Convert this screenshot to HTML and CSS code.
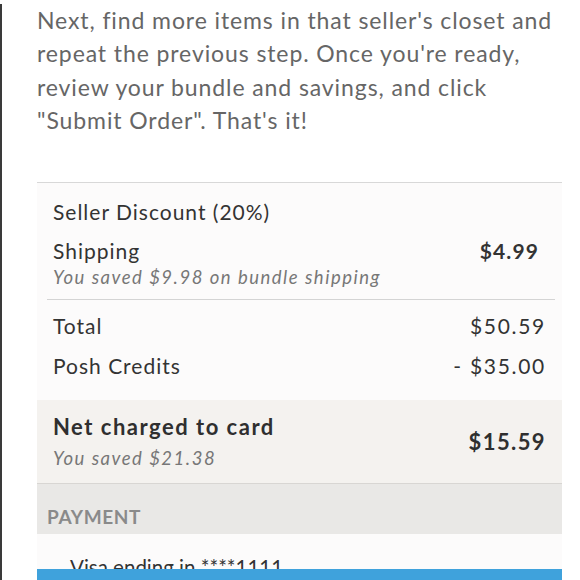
FILE: index.html
```html
<!DOCTYPE html>
<html lang="en">
<head>
    <meta charset="UTF-8">
    <meta name="viewport" content="width=device-width, initial-scale=1.0">
    <title>Bundle Checkout</title>
    <link rel="stylesheet" href="styles.css">
</head>
<body>

<div class="page">
    <div class="column">
        <p class="intro">Next, find more items in that seller's closet and repeat the previous step. Once you're ready, review your bundle and savings, and click "Submit Order". That's it!</p>

        <div class="summary">
            <!-- Order breakdown -->
            <div class="breakdown">
                <div class="row">
                    <span class="label">Seller Discount (20%)</span>
                </div>
                <div class="row">
                    <div>
                        <div class="label">Shipping</div>
                        <div class="note">You saved $9.98 on bundle shipping</div>
                    </div>
                    <span class="amount bold">$4.99</span>
                </div>
            </div>

            <div class="totals">
                <div class="row">
                    <span class="label">Total</span>
                    <span class="amount">$50.59</span>
                </div>
                <div class="row">
                    <span class="label">Posh Credits</span>
                    <span class="amount">- $35.00</span>
                </div>
            </div>

            <!-- Net charge -->
            <div class="net">
                <div>
                    <div class="net-title">Net charged to card</div>
                    <div class="note">You saved $21.38</div>
                </div>
                <span class="net-amount">$15.59</span>
            </div>

            <div class="section-head">PAYMENT</div>
            <div class="payment">
                <span class="card">Visa ending in ****1111</span>
            </div>
        </div>
    </div>

    <button class="submit">Submit Order</button>
</div>

</body>
</html>
```

FILE: styles.css
```css
body {
    margin: 0;
    padding: 0;
    background-color: #ffffff;
    font-family: Lato, "Open Sans", Arial, sans-serif;
    color: #333;
    overflow: hidden;
}

.page {
    border-left: 2px solid #3a3a3a;
    height: 100vh;
    box-sizing: border-box;
}

.column {
    margin-left: 35px;
    width: 525px;
}

.intro {
    margin: 4px 0 0;
    font-size: 23px;
    line-height: 33.3px;
    letter-spacing: 0.9px;
    color: #666;
    height: 178px;
}

.summary {
    background-color: #fcfbfb;
    border-top: 1px solid #d8d8d8;
}

.row {
    display: flex;
    justify-content: space-between;
    align-items: flex-start;
}

.label {
    font-size: 21px;
    line-height: 24px;
    letter-spacing: 1px;
    color: #333;
}

.note {
    font-size: 18.5px;
    line-height: 24px;
    letter-spacing: 1.5px;
    font-style: italic;
    color: #777;
    margin-top: 2px;
}

.amount {
    font-size: 21px;
    line-height: 24px;
    letter-spacing: 1.7px;
    color: #333;
}

.bold {
    font-weight: 700;
    letter-spacing: 1.1px;
}

.breakdown {
    padding: 17px 16px 10px;
    margin: 0 7px 0 0;
    display: flex;
    flex-direction: column;
    gap: 15px;
}

.totals {
    margin: 0 7px 0 10px;
    border-top: 1px solid #d4d4d4;
    padding: 14px 9px 22px 6px;
    display: flex;
    flex-direction: column;
    gap: 16px;
}

.net {
    background-color: #f4f2ef;
    padding: 14px 16px 14px;
    display: flex;
    justify-content: space-between;
    align-items: center;
    border-bottom: 1px solid #d8d6d3;
}

.net-title {
    font-size: 22px;
    line-height: 26px;
    letter-spacing: 1.5px;
    font-weight: 700;
    color: #2f2f2f;
}

.net .note {
    margin-top: 7px;
    line-height: 22px;
}

.net-amount {
    font-size: 22px;
    letter-spacing: 1.4px;
    font-weight: 700;
    color: #2f2f2f;
}

.section-head {
    background-color: #e9e8e6;
    padding: 22px 10px 6px;
    font-size: 19px;
    line-height: 22px;
    letter-spacing: 0.6px;
    font-weight: 700;
    color: #8a8a8a;
}

.payment {
    padding: 21px 33px 40px;
}

.card {
    font-size: 20.5px;
    line-height: 24px;
    color: #333;
}

.submit {
    position: fixed;
    left: 37px;
    bottom: 0;
    width: 525px;
    height: 11px;
    border: none;
    padding: 0;
    background-color: #3fa2dc;
    color: transparent;
    overflow: hidden;
}
```
